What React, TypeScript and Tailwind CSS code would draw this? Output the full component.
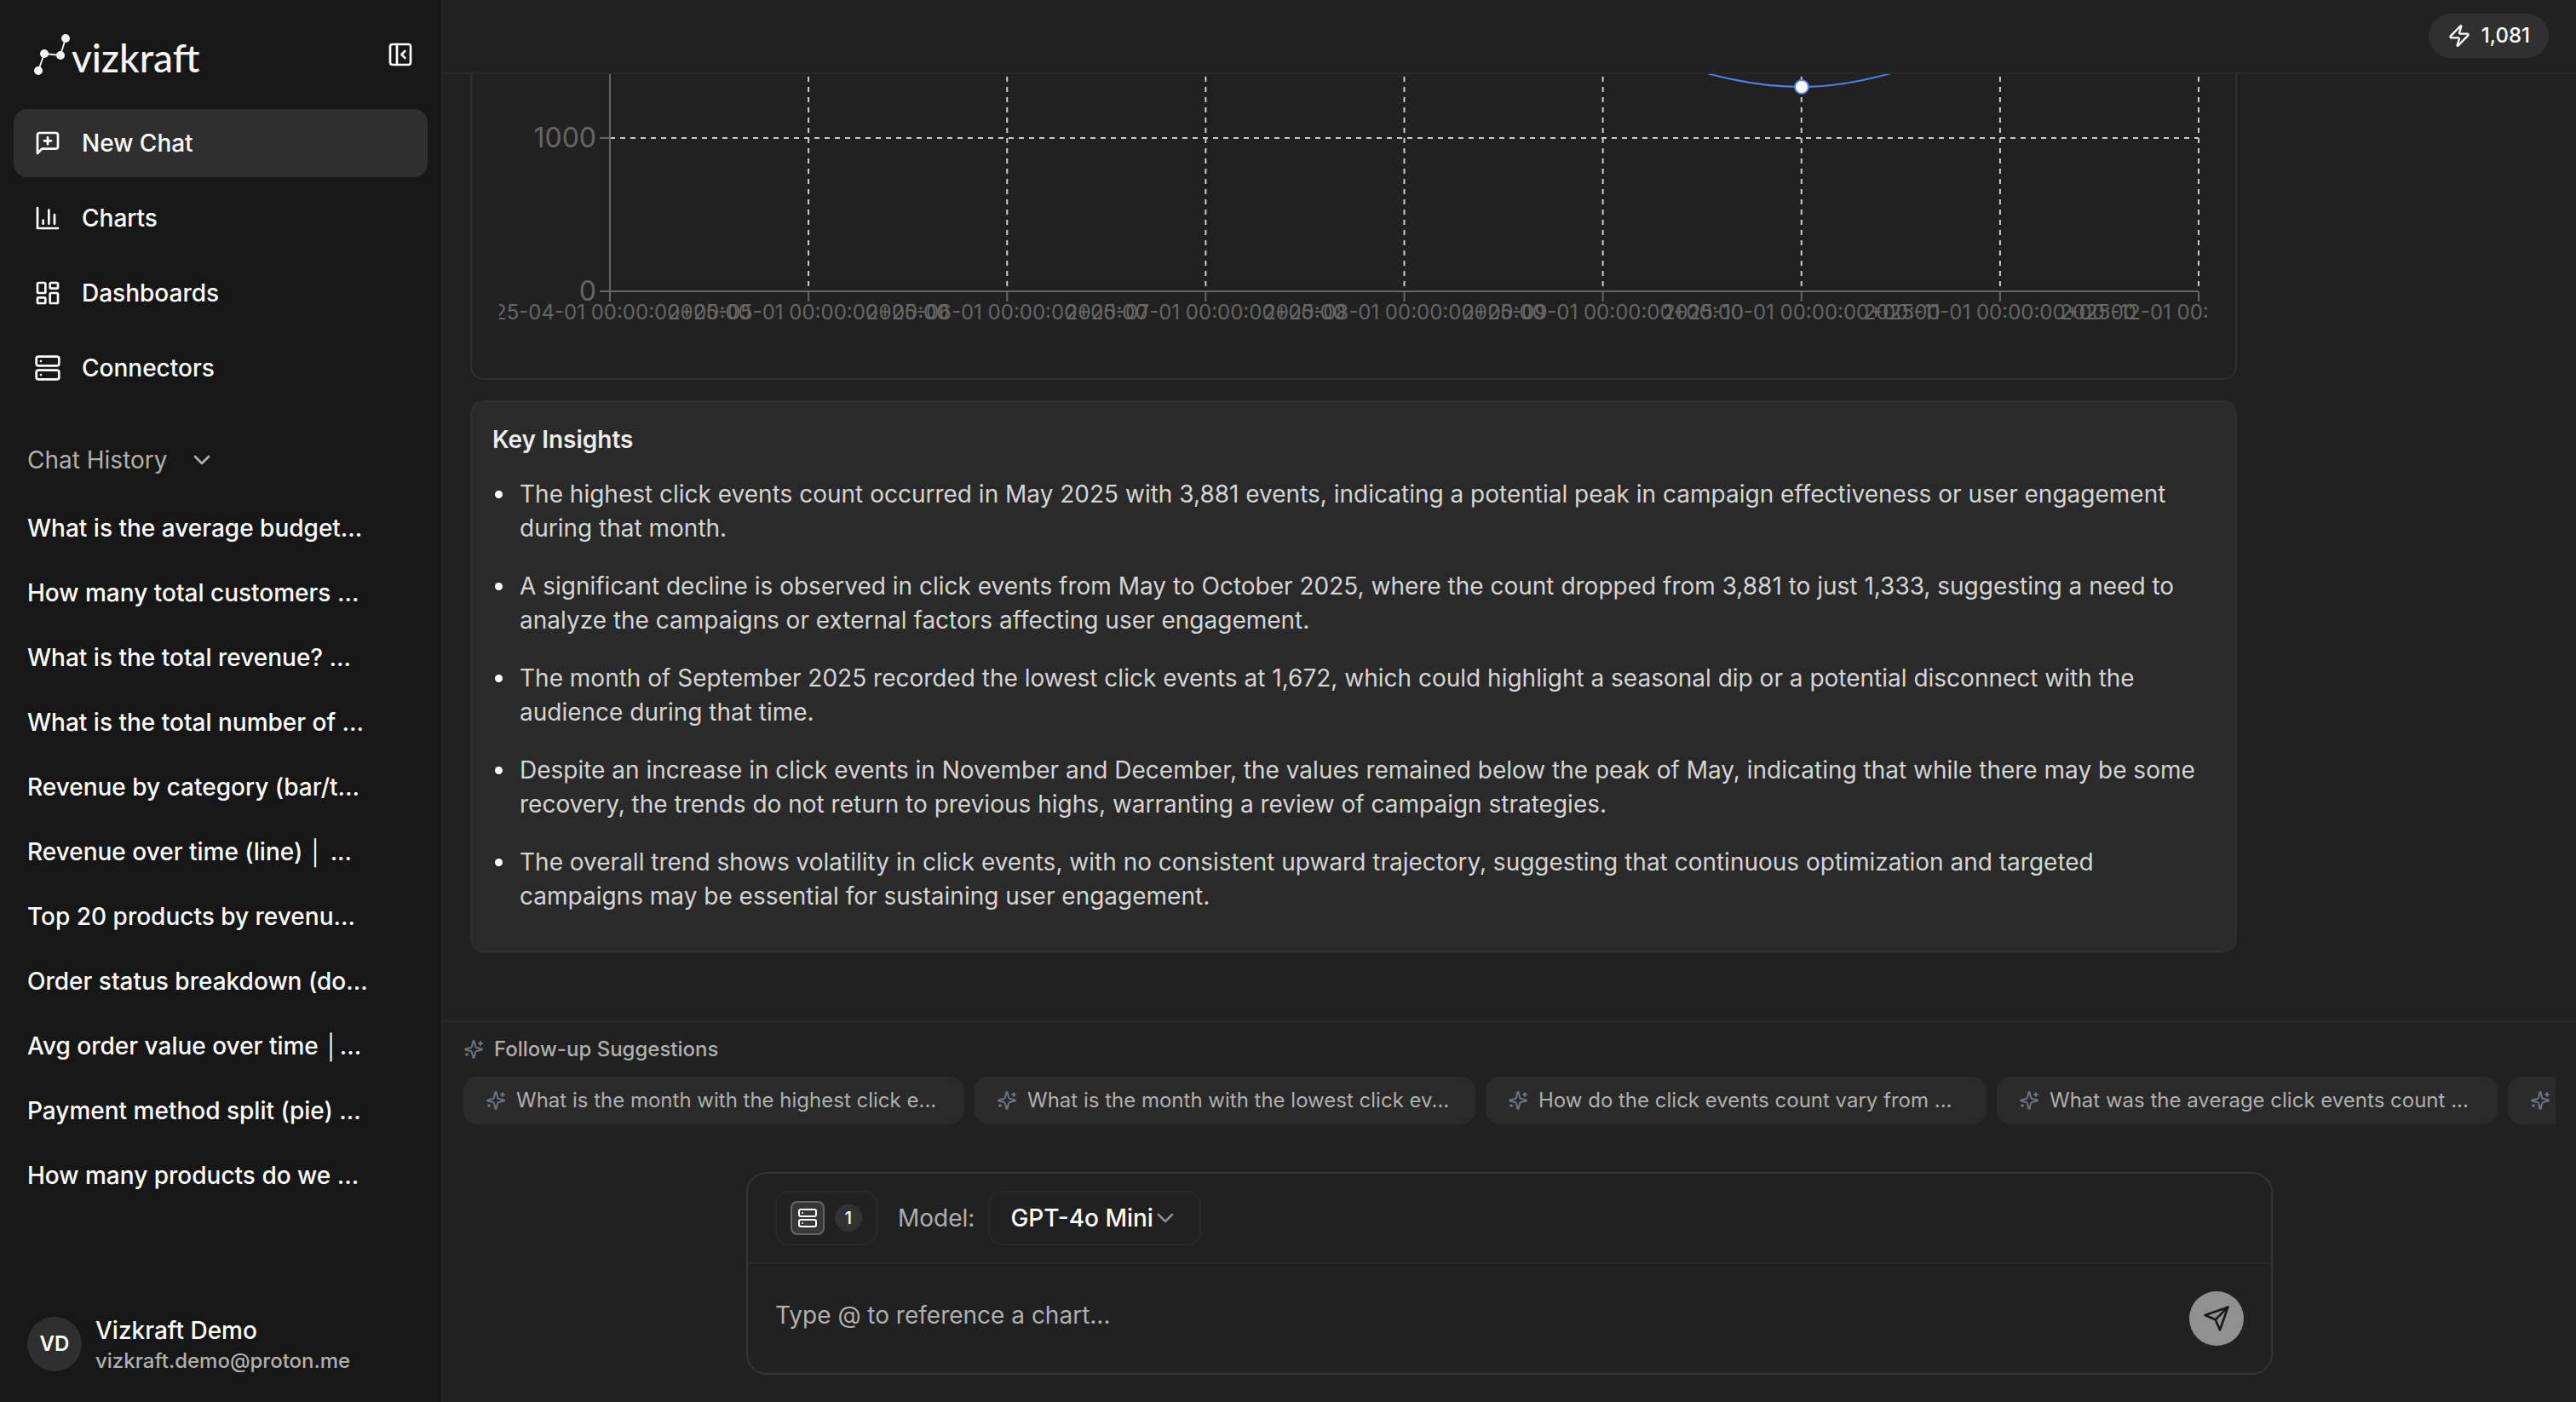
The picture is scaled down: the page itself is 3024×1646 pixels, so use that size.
import React, { useState } from "react";
import { ChevronDown, LayoutDashboard, PanelLeftClose, Server, Zap } from "lucide-react";

type IconProps = { className?: string };

function StrokeIcon({ className, children }: IconProps & { children: React.ReactNode }) {
  return (
    <svg
      viewBox="0 0 24 24"
      fill="none"
      stroke="currentColor"
      strokeWidth="2"
      strokeLinecap="round"
      strokeLinejoin="round"
      aria-hidden="true"
      className={className}
    >
      {children}
    </svg>
  );
}

const NewChatIcon = ({ className }: IconProps) => (
  <StrokeIcon className={className}>
    <path d="M21 15a2 2 0 0 1-2 2H7l-4 4V5a2 2 0 0 1 2-2h14a2 2 0 0 1 2 2z" />
    <path d="M12 7v6" />
    <path d="M9 10h6" />
  </StrokeIcon>
);

const ChartsIcon = ({ className }: IconProps) => (
  <StrokeIcon className={className}>
    <path d="M3 3v18h18" />
    <path d="M18 17V9" />
    <path d="M13 17V5" />
    <path d="M8 17v-3" />
  </StrokeIcon>
);

const SparklesIcon = ({ className }: IconProps) => (
  <StrokeIcon className={className}>
    <path d="M9.937 15.5A2 2 0 0 0 8.5 14.063l-6.135-1.582a.5.5 0 0 1 0-.962L8.5 9.936A2 2 0 0 0 9.937 8.5l1.582-6.135a.5.5 0 0 1 .963 0L14.063 8.5A2 2 0 0 0 15.5 9.937l6.135 1.581a.5.5 0 0 1 0 .964L15.5 14.063a2 2 0 0 0-1.437 1.437l-1.582 6.135a.5.5 0 0 1-.963 0z" />
    <path d="M20 3v4" />
    <path d="M22 5h-4" />
    <path d="M4 17v2" />
    <path d="M5 18H3" />
  </StrokeIcon>
);

const SendIcon = ({ className }: IconProps) => (
  <StrokeIcon className={className}>
    <path d="m22 2-7 20-4-9-9-4Z" />
    <path d="M22 2 11 13" />
  </StrokeIcon>
);

const navItems = [
  { label: "New Chat", icon: NewChatIcon },
  { label: "Charts", icon: ChartsIcon },
  { label: "Dashboards", icon: LayoutDashboard },
  { label: "Connectors", icon: Server },
];

const chatHistory = [
  "What is the average budget...",
  "How many total customers ...",
  "What is the total revenue? ...",
  "What is the total number of ...",
  "Revenue by category (bar/t...",
  "Revenue over time (line) │ ...",
  "Top 20 products by revenu...",
  "Order status breakdown (do...",
  "Avg order value over time │...",
  "Payment method split (pie) ...",
  "How many products do we ...",
];

const insights = [
  "The highest click events count occurred in May 2025 with 3,881 events, indicating a potential peak in campaign effectiveness or user engagement during that month.",
  "A significant decline is observed in click events from May to October 2025, where the count dropped from 3,881 to just 1,333, suggesting a need to analyze the campaigns or external factors affecting user engagement.",
  "The month of September 2025 recorded the lowest click events at 1,672, which could highlight a seasonal dip or a potential disconnect with the audience during that time.",
  "Despite an increase in click events in November and December, the values remained below the peak of May, indicating that while there may be some recovery, the trends do not return to previous highs, warranting a review of campaign strategies.",
  "The overall trend shows volatility in click events, with no consistent upward trajectory, suggesting that continuous optimization and targeted campaigns may be essential for sustaining user engagement.",
];

const suggestions = [
  "What is the month with the highest click e...",
  "What is the month with the lowest click ev...",
  "How do the click events count vary from ...",
  "What was the average click events count ...",
];

const months = ["04", "05", "06", "07", "08", "09", "10", "11", "12"];

function Logo() {
  return (
    <a href="#" className="flex items-center text-[#f5f5f3]">
      <svg viewBox="0 0 44 52" className="h-[52px] w-[44px]" fill="currentColor" aria-hidden="true">
        <path d="M5 45 12 25 31 27 37 7" fill="none" stroke="currentColor" strokeWidth="1.8" />
        <circle cx="5" cy="45" r="5" />
        <circle cx="12" cy="25" r="5" />
        <circle cx="31" cy="27" r="5" />
        <circle cx="37" cy="7" r="5" />
      </svg>
      <span className="pt-2 font-['Lato',sans-serif] text-[46px] leading-[48px] font-medium">
        vizkraft
      </span>
    </a>
  );
}

function Sidebar() {
  return (
    <aside className="flex w-[520px] shrink-0 flex-col border-r-2 border-[#262626] bg-[#171717] text-white">
      <div className="flex h-32 items-center justify-between pl-10 pr-8">
        <Logo />
        <button type="button" aria-label="Collapse sidebar">
          <PanelLeftClose className="size-8" />
        </button>
      </div>

      <nav className="flex flex-col gap-2 px-4">
        {navItems.map(({ label, icon: Icon }, i) => (
          <a
            key={label}
            href="#"
            className={`flex h-20 items-center gap-6 rounded-2xl px-6 text-[28px] font-medium ${
              i === 0 ? "bg-[#2f2f2f]" : ""
            }`}
          >
            <Icon className="size-8" />
            {label}
          </a>
        ))}
      </nav>

      <div className="mt-12 flex min-h-0 flex-1 flex-col px-8">
        <button
          type="button"
          className="flex items-center gap-6 text-[28px] leading-10 text-[#afafaf]"
        >
          Chat History
          <ChevronDown className="size-8" />
        </button>
        <ul className="mt-6 flex flex-col gap-1">
          {chatHistory.map((title) => (
            <li key={title}>
              <a
                href="#"
                className="flex h-18 items-center whitespace-pre text-[28px] font-medium"
              >
                {title}
              </a>
            </li>
          ))}
        </ul>
      </div>

      <div className="flex items-center gap-4 p-8">
        <div className="flex size-16 items-center justify-center rounded-full bg-[#2f2f2f] text-2xl font-semibold">
          VD
        </div>
        <div>
          <p className="text-[28px] leading-10 font-medium">Vizkraft Demo</p>
          <p className="text-2xl leading-8 font-medium text-[#afafaf]">vizkraft.demo@proton.me</p>
        </div>
      </div>
    </aside>
  );
}

// Lower part of the click events line chart
function ClickEventsChart() {
  const left = 130;
  const right = 1995;
  const step = (right - left) / (months.length - 1);

  return (
    <svg viewBox="0 0 2006 325" className="w-full" role="img" aria-label="Click events by month">
      <g stroke="#cccccc" strokeWidth="2" strokeDasharray="6 6">
        <path d={`M${left} 75H${right}`} />
        {months.slice(1).map((month, i) => (
          <path key={month} d={`M${left + step * (i + 1)} 3V255`} />
        ))}
      </g>
      <g stroke="#666666" strokeWidth="2">
        <path d={`M${left} 0V267`} />
        <path d={`M${left - 12} 255H${right}`} />
        <path d={`M${left - 12} 75H${left}`} />
        {months.slice(1).map((month, i) => (
          <path key={month} d={`M${left + step * (i + 1)} 255V267`} />
        ))}
      </g>
      <g fill="#666666" textAnchor="end" fontSize="32">
        <text x={left - 16} y="86">1000</text>
        <text x={left - 16} y="266">0</text>
      </g>
      <g fill="#666666" textAnchor="middle" fontSize="24">
        {months.map((month, i) => (
          <text key={month} x={left + step * i} y="288">{`2025-${month}-01 00:00:00+00:00`}</text>
        ))}
      </g>
      <path
        d="M1296 -46C1374 -11 1451 15 1529 15C1607 15 1684 -16 1762 -47"
        fill="none"
        stroke="#4f80e8"
        strokeWidth="2"
      />
      <circle cx="1529" cy="15" r="8" fill="#ffffff" stroke="#4f80e8" strokeWidth="2" />
    </svg>
  );
}

function Composer() {
  const [message, setMessage] = useState("");
  const [model, setModel] = useState("GPT-4o Mini");

  return (
    <form
      onSubmit={(e) => e.preventDefault()}
      className="mx-auto w-full max-w-[1792px] rounded-3xl border-2 border-[#353535]"
    >
      <div className="flex items-center gap-6 border-b-2 border-[#292929] px-8 py-5">
        <button
          type="button"
          aria-label="Connectors"
          className="flex h-16 items-center gap-3 rounded-2xl border-2 border-[#282828] px-4"
        >
          <span className="flex size-10 items-center justify-center rounded-lg border-2 border-[#666666] bg-[#373737] text-white">
            <Server className="size-6" />
          </span>
          <span className="flex size-8 items-center justify-center rounded-full bg-[#323232] text-xl font-medium text-white">
            1
          </span>
        </button>
        <div className="flex items-center gap-4 text-[28px]">
          <label htmlFor="model" className="text-[#afafaf]">
            Model:
          </label>
          <div className="relative">
            <select
              id="model"
              value={model}
              onChange={(e) => setModel(e.target.value)}
              className="block h-16 appearance-none rounded-2xl border-2 border-[#282828] bg-[#212121] pr-[54px] pl-6 font-medium text-white"
            >
              <option>GPT-4o Mini</option>
            </select>
            <ChevronDown className="pointer-events-none absolute top-4 right-6.5 size-8 text-[#8a8a8a]" />
          </div>
        </div>
      </div>
      <div className="flex items-center gap-6 p-8">
        <textarea
          rows={1}
          aria-label="Message"
          placeholder="Type @ to reference a chart..."
          value={message}
          onChange={(e) => setMessage(e.target.value)}
          className="block h-16 flex-1 resize-none py-2 text-[28px] leading-10 text-white outline-none placeholder:text-[#afafaf]"
        />
        <button
          type="submit"
          aria-label="Send"
          className="flex size-16 items-center justify-center rounded-full bg-[#909090] text-[#171717]"
        >
          <SendIcon className="size-8" />
        </button>
      </div>
    </form>
  );
}

export default function App() {
  return (
    <div className="flex h-screen bg-[#212121] font-['Inter',sans-serif]">
      <Sidebar />

      <div className="flex min-w-0 flex-1 flex-col">
        <header className="flex justify-end border-b-2 border-[#292929] px-8 pt-4 pb-[17px]">
          <div className="flex h-13 items-center gap-3 rounded-full bg-[#303030] px-[22px] text-2xl font-medium text-white">
            <Zap className="size-7" />
            1,081
          </div>
        </header>

        <main className="min-h-0 flex-1 overflow-hidden px-8">
          <div className="flex max-w-[85%] flex-col gap-6">
            <section className="rounded-b-2xl border-2 border-t-0 border-[#303030] px-8 pb-8">
              <ClickEventsChart />
            </section>

            <section className="rounded-2xl border-2 border-[#2f2f2f] bg-[#2a2a2a] px-6 pt-6 pb-11 text-[28px] leading-10">
              <h3 className="font-semibold text-[#ececec]">Key Insights</h3>
              <ul className="mt-6 flex list-disc flex-col gap-7 pl-7 text-[#d4d4d4] marker:text-white">
                {insights.map((text) => (
                  <li key={text} className="pl-1">
                    {text}
                  </li>
                ))}
              </ul>
            </section>
          </div>
        </main>

        <section className="border-t-2 border-[#292929] px-6 pt-4 pb-6">
          <h4 className="flex items-center gap-3 text-2xl leading-8 font-medium text-[#afafaf]">
            <SparklesIcon className="size-6 text-[#6b7280]" />
            Follow-up Suggestions
          </h4>
          <div className="mt-4 flex gap-3 overflow-hidden">
            {suggestions.map((text) => (
              <button
                key={text}
                type="button"
                className="flex h-14 w-[588px] shrink-0 items-center gap-3 rounded-2xl bg-[#2a2a2a] px-[26px] text-2xl whitespace-nowrap text-[#afafaf]"
              >
                <SparklesIcon className="size-6 shrink-0 text-[#6b7280]" />
                {text}
              </button>
            ))}
            <button
              type="button"
              aria-label="More suggestions"
              className="flex h-14 w-[588px] shrink-0 items-center rounded-2xl bg-[#2a2a2a] px-[26px]"
            >
              <SparklesIcon className="size-6 shrink-0 text-[#6b7280]" />
            </button>
          </div>
        </section>

        <div className="p-8">
          <Composer />
        </div>
      </div>
    </div>
  );
}
